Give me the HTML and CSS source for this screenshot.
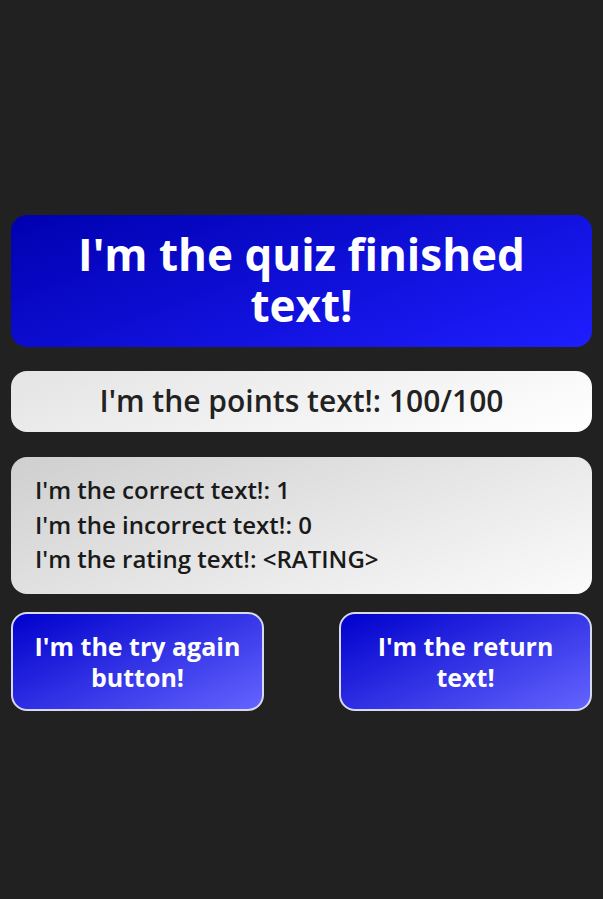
FILE: index.html
```html
<!DOCTYPE html>
<html lang="en">
<head>
<meta charset="utf-8">
<title>Quiz finished</title>
<link rel="stylesheet" href="styles.css">
</head>
<body>
<main class="page">
  <h1 class="title">I'm the quiz finished text!</h1>
  <div class="points">I'm the points text!: 100/100</div>
  <div class="stats">
    <p class="stat">I'm the correct text!: 1</p>
    <p class="stat">I'm the incorrect text!: 0</p>
    <p class="stat">I'm the rating text!: &lt;RATING&gt;</p>
  </div>
  <div class="actions">
    <button class="btn" type="button">I'm the try again button!</button>
    <button class="btn" type="button">I'm the return text!</button>
  </div>
</main>
</body>
</html>
```
FILE: styles.css
```css
html, body {
  margin: 0;
  padding: 0;
  background: #212121;
  height: 100%;
}
body {
  font-family: "Open Sans", "Noto Sans", sans-serif;
}
.page {
  box-sizing: border-box;
  padding: 215px 11px 0;
  display: flex;
  flex-direction: column;
}
.title {
  margin: 0;
  box-sizing: border-box;
  height: 132px;
  border-radius: 16px;
  background: linear-gradient(160deg, #0000b0 0%, #1e1eff 100%);
  color: #fff;
  font-size: 44px;
  font-weight: 700;
  line-height: 51px;
  text-align: center;
  padding: 14px 50px 0;
}
.points {
  margin-top: 24px;
  height: 61px;
  border-radius: 16px;
  background: linear-gradient(160deg, #e4e4e4 0%, #ffffff 100%);
  color: #222;
  font-size: 30px;
  font-weight: 600;
  line-height: 59px;
  text-align: center;
}
.stats {
  margin-top: 25px;
  box-sizing: border-box;
  height: 137px;
  border-radius: 16px;
  background: linear-gradient(160deg, #cfcfcf 0%, #fbfbfb 100%);
  padding: 16px 24px 0;
  color: #1a1a1a;
}
.stat {
  margin: 0;
  font-size: 24px;
  font-weight: 600;
  line-height: 34.5px;
}
.actions {
  margin-top: 18px;
  display: flex;
  justify-content: space-between;
}
.btn {
  box-sizing: border-box;
  width: 253px;
  height: 99px;
  border: 2px solid #d8d8ee;
  border-radius: 16px;
  background: linear-gradient(155deg, #0000cc 0%, #6464ff 100%);
  color: #fff;
  font-family: inherit;
  font-size: 25px;
  font-weight: 700;
  line-height: 31px;
  padding: 0 14px;
  text-align: center;
}
```
